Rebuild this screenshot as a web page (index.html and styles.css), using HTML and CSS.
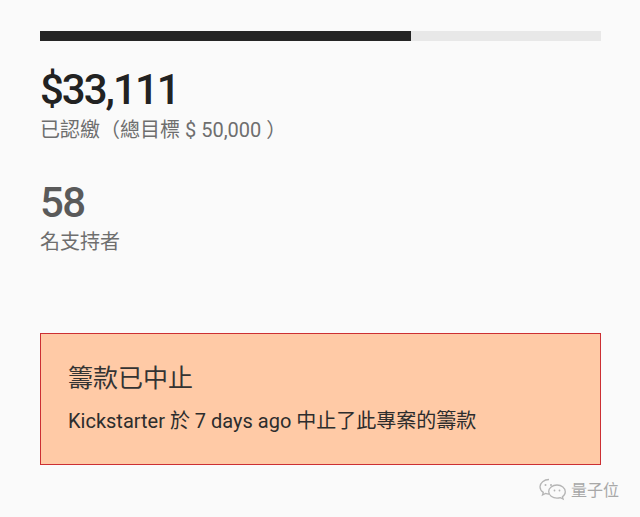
FILE: index.html
```html
<!DOCTYPE html>
<html lang="zh-Hant">
<head>
<meta charset="utf-8">
<link rel="stylesheet" href="styles.css">
</head>
<body>
<main class="page">
  <div class="progress"><div class="progress-fill" style="width:66.2%"></div></div>
  <section class="stat">
    <div class="stat-amount">$33,111</div>
    <div class="stat-label">已認繳（總目標 $ 50,000 ）</div>
  </section>
  <section class="stat stat-backers">
    <div class="stat-count">58</div>
    <div class="stat-label">名支持者</div>
  </section>
  <section class="notice">
    <h2 class="notice-title">籌款已中止</h2>
    <p class="notice-text">Kickstarter 於 7 days ago 中止了此專案的籌款</p>
  </section>
</main>
<div class="watermark">
  <svg class="wm-icon" width="30" height="24" viewBox="0 0 30 24" fill="none" stroke="#b5b5b5" stroke-width="1.3">
    <path d="M11 2.5c-5 0-9 3.3-9 7.3 0 2.3 1.3 4.3 3.3 5.6l-.8 2.6 3-1.6c1.1.4 2.3.6 3.5.6"/>
    <path d="M19 8c4.6 0 8.3 3 8.3 6.7 0 2-1.1 3.8-2.9 5l.7 2.3-2.7-1.4c-1.1.4-2.2.5-3.4.5-4.6 0-8.3-3-8.3-6.6S14.4 8 19 8z"/>
    <circle cx="7.5" cy="8" r="1" fill="#b5b5b5" stroke="none"/>
    <circle cx="13" cy="8" r="1" fill="#b5b5b5" stroke="none"/>
    <circle cx="16.5" cy="13.5" r=".9" fill="#b5b5b5" stroke="none"/>
    <circle cx="21.5" cy="13.5" r=".9" fill="#b5b5b5" stroke="none"/>
  </svg>
  <span class="wm-text">量子位</span>
</div>
</body>
</html>
```
FILE: styles.css
```css
* { box-sizing: border-box; }
html, body { margin: 0; padding: 0; }
body {
  background: #fafafa;
  font-family: Roboto, "Noto Sans CJK TC", sans-serif;
  width: 640px;
  height: 517px;
  position: relative;
  overflow: hidden;
}
.page {
  padding: 31px 39px 0 40px;
  display: flex;
  flex-direction: column;
}
.progress {
  height: 10px;
  background: #e8e8e8;
}
.progress-fill {
  height: 100%;
  background: #252525;
}
.stat {
  margin-top: 25px;
  display: flex;
  flex-direction: column;
}
.stat-amount {
  font-size: 42px;
  font-weight: 500;
  letter-spacing: -2px;
  line-height: 48px;
  color: #222;
}
.stat-count {
  font-size: 42px;
  font-weight: 500;
  letter-spacing: -1.5px;
  line-height: 46px;
  color: #5a5a5a;
}
.stat-label {
  font-size: 20px;
  line-height: 28px;
  color: #6e6e6e;
  margin-top: 2px;
}
.stat-backers {
  margin-top: 36px;
}
.notice {
  margin-top: 77px;
  height: 132px;
  background: #ffcaa6;
  border: 1px solid #cc2f33;
  padding: 29px 27px 0;
}
.notice-title {
  margin: 0;
  font-size: 25px;
  font-weight: 400;
  line-height: 32px;
  color: #333;
}
.notice-text {
  margin: 12px 0 0;
  font-size: 20px;
  line-height: 28px;
  color: #2d2d2d;
}
.watermark {
  position: absolute;
  left: 538px;
  top: 477px;
  display: flex;
  align-items: center;
  gap: 3px;
}
.wm-text {
  font-size: 16px;
  color: #a8a8a8;
}
```
